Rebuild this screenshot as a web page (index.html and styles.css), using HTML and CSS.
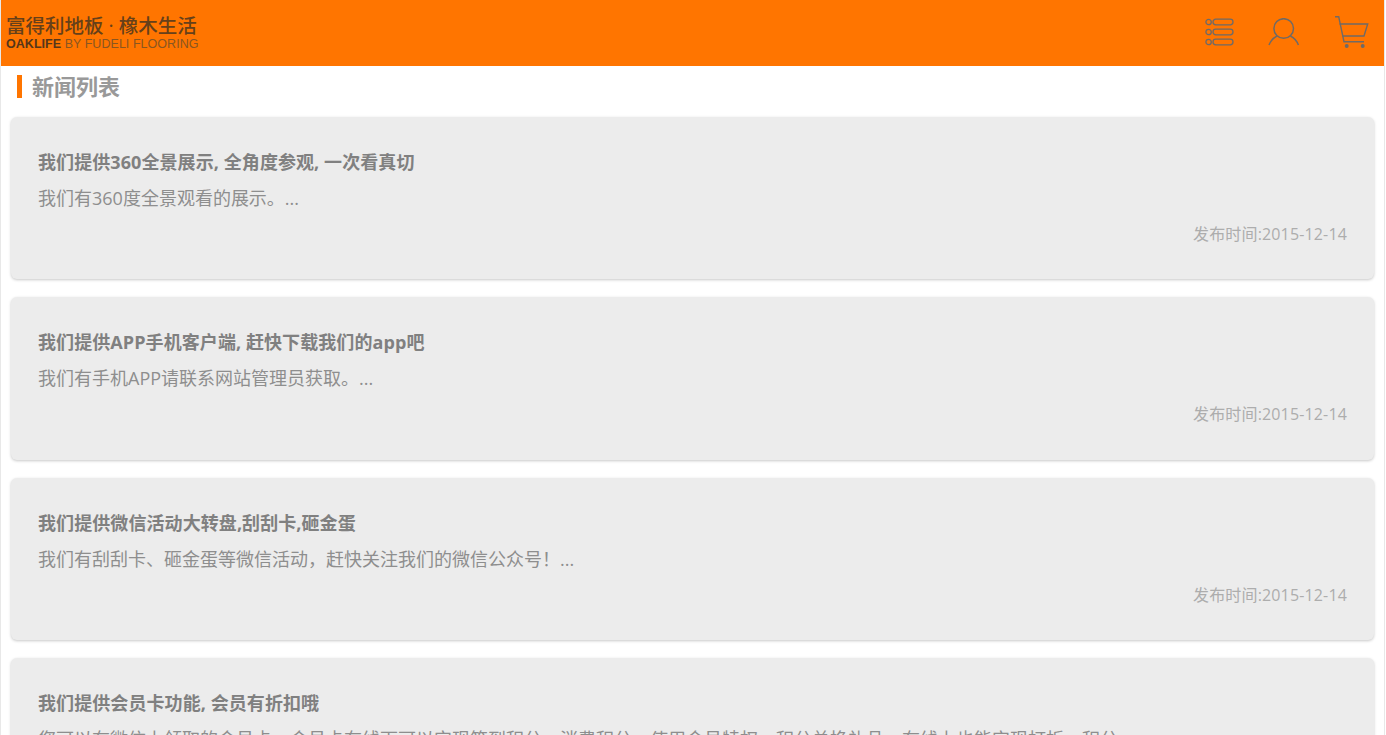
FILE: index.html
```html
<!DOCTYPE html>
<html lang="zh-CN">
<head>
<meta charset="UTF-8">
<title>新闻列表</title>
<link rel="stylesheet" href="styles.css">
</head>
<body>
<div class="page">
    <header class="topbar">
        <div class="logo">
            <div class="logo-cn">富得利地板 · 橡木生活</div>
            <div class="logo-en"><b>OAKLIFE</b> BY FUDELI FLOORING</div>
        </div>
        <nav class="top-icons">
            <svg class="icon-menu" width="30" height="30" viewBox="0 0 30 30" fill="none" stroke="#6f6a66" stroke-width="1.3">
                <circle cx="3.600" cy="4" r="2.700"/>
                <rect x="8" y="1.200" width="20" height="5.600" rx="2.800"/>
                <circle cx="3.600" cy="14" r="2.700"/>
                <rect x="8" y="11.200" width="20" height="5.600" rx="2.800"/>
                <circle cx="3.600" cy="24" r="2.700"/>
                <rect x="8" y="21.200" width="20" height="5.600" rx="2.800"/>
            </svg>
            <svg class="icon-user" width="32" height="30" viewBox="0 0 32 30" fill="none" stroke="#6f6a66" stroke-width="1.500">
                <circle cx="15.700" cy="10.500" r="9.800"/>
                <path d="M1 27C2.500 23 5 20 9 18M30.400 27C28.900 23 26.400 20 22.400 18"/>
            </svg>
            <svg class="icon-cart" width="36" height="34" viewBox="0 0 36 34" fill="none" stroke="#6f6a66" stroke-width="1.400">
                <path d="M2 .7h3.700L11 25.700h20"/>
                <path d="M6.500 8h28.200L31 20H9.500"/>
                <circle cx="13.700" cy="30" r="1.300" fill="#6f6a66"/>
                <circle cx="29.700" cy="30" r="1.300" fill="#6f6a66"/>
            </svg>
        </nav>
    </header>

    <h2 class="section-title">新闻列表</h2>

    <div class="news-list">
        <div class="news-card">
            <h3>我们提供360全景展示, 全角度参观, 一次看真切</h3>
            <p>我们有360度全景观看的展示。...</p>
            <div class="news-date">发布时间:2015-12-14</div>
        </div>
        <div class="news-card">
            <h3>我们提供APP手机客户端, 赶快下载我们的app吧</h3>
            <p>我们有手机APP请联系网站管理员获取。...</p>
            <div class="news-date">发布时间:2015-12-14</div>
        </div>
        <div class="news-card">
            <h3>我们提供微信活动大转盘,刮刮卡,砸金蛋</h3>
            <p>我们有刮刮卡、砸金蛋等微信活动，赶快关注我们的微信公众号！...</p>
            <div class="news-date">发布时间:2015-12-14</div>
        </div>
        <div class="news-card">
            <h3>我们提供会员卡功能, 会员有折扣哦</h3>
            <p>您可以在微信上领取的会员卡，会员卡在线下可以实现签到积分，消费积分，使用会员特权，积分兑换礼品，在线上也能实现打折，积分</p>
            <div class="news-date">发布时间:2015-12-14</div>
        </div>
    </div>
</div>
</body>
</html>
```

FILE: styles.css
```css
:root {
    --brand: #ff7500;
    --card: #ececec;
    --line: #e8e8e8;
    --title: #808080;
    --text: #8e8e8e;
    --date: #adadad;
}

html, body {
    margin: 0;
    height: 100%;
    overflow: hidden;
}

body {
    font-family: "Open Sans", "Noto Sans CJK SC", sans-serif;
    background-color: #fff;
}

.page {
    margin-right: 1px;
    border-left: 1px solid var(--line);
    border-right: 1px solid var(--line);
}

.topbar {
    height: 66px;
    background-color: var(--brand);
    display: flex;
    justify-content: space-between;
    align-items: center;
    padding: 0 15px 0 5px;
}

.logo {
    line-height: 1;
}

.logo-cn {
    font-size: 19.500px;
    font-weight: 500;
    color: #66401a;
    white-space: nowrap;
}

.logo-en {
    font-family: "Liberation Sans", sans-serif;
    font-size: 12.500px;
    margin-top: 2px;
    letter-spacing: 0.040px;
    white-space: nowrap;
    color: #8a5620;
}

.logo-en b {
    color: #55361a;
}

.top-icons {
    display: flex;
    align-items: center;
    gap: 33px;
}

.section-title {
    margin: 9px 0 0 16px;
    height: 23px;
    padding-left: 10px;
    border-left: 5px solid var(--brand);
    font-size: 22px;
    line-height: 23px;
    font-weight: 700;
    color: #999;
}

.news-list {
    margin: 19px 10px 0 10px;
}

.news-card {
    background-color: var(--card);
    border-radius: 6px;
    box-shadow: 0 1px 3px rgba(0, 0, 0, 0.22);
    height: 162.400px;
    margin-bottom: 18px;
    padding: 32px 27px 0;
    box-sizing: border-box;
}

.news-card h3 {
    margin: 0;
    font-size: 18px;
    line-height: 26px;
    font-weight: 700;
    letter-spacing: 0.080px;
    color: var(--title);
}

.news-card p {
    margin: 10px 0 0;
    font-size: 18px;
    line-height: 26px;
    color: var(--text);
    white-space: nowrap;
}

.news-date {
    margin-top: 10px;
    text-align: right;
    font-size: 16px;
    line-height: 26px;
    letter-spacing: 0.150px;
    color: var(--date);
}
```
